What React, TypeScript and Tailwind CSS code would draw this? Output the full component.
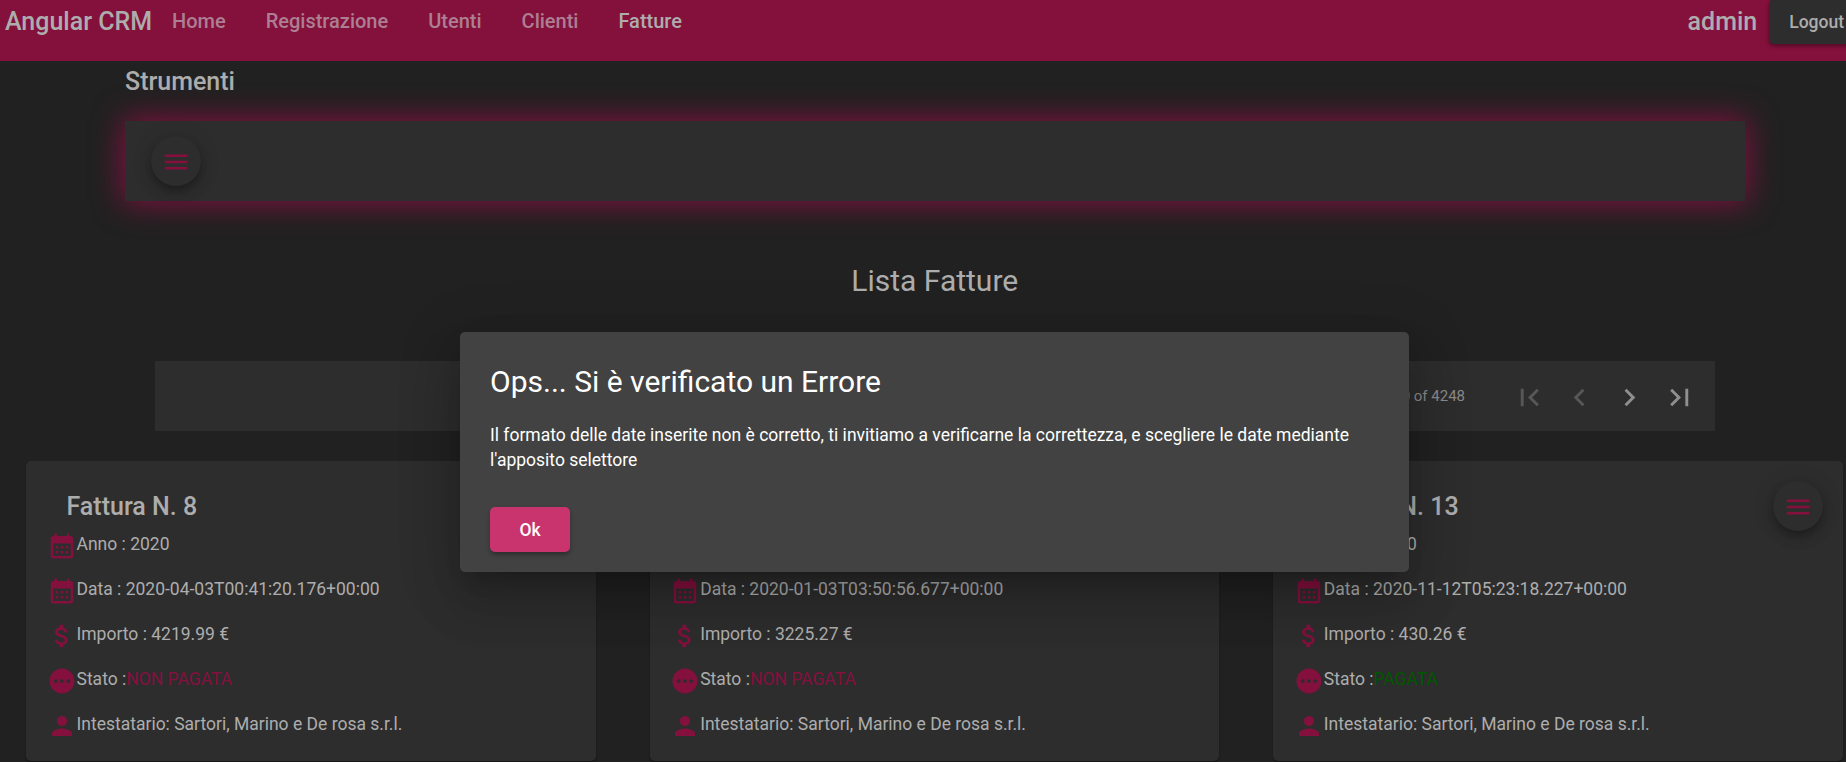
import type { ReactNode } from "react";
import {
  MdAttachMoney,
  MdCalendarMonth,
  MdChevronLeft,
  MdChevronRight,
  MdFirstPage,
  MdLastPage,
  MdMenu,
  MdPending,
  MdPerson,
} from "react-icons/md";

type Invoice = { number: number; year: number; date: string; amount: string; paid: boolean; holder: string };

const holder = "Sartori, Marino e De rosa s.r.l.";

const invoices: Invoice[] = [
  { number: 8, year: 2020, date: "2020-04-03T00:41:20.176+00:00", amount: "4219.99", paid: false, holder },
  { number: 11, year: 2020, date: "2020-01-03T03:50:56.677+00:00", amount: "3225.27", paid: false, holder },
  { number: 13, year: 2020, date: "2020-11-12T05:23:18.227+00:00", amount: "430.26", paid: true, holder },
];

const links = ["Home", "Registrazione", "Utenti", "Clienti"];

function MenuFab() {
  return (
    <button className="flex size-[50px] items-center justify-center rounded-full bg-[#2d2d2d] pt-[2px] text-[#84103e] shadow-[0_4px_6px_-1px_rgba(0,0,0,0.2),0_7.5px_12.5px_rgba(0,0,0,0.14),0_1px_22px_rgba(0,0,0,0.12)]">
      <MdMenu size={30} />
    </button>
  );
}

function Row({ icon, children }: { icon: ReactNode; children: ReactNode }) {
  return (
    <div className="flex h-[45px] items-start pl-[20.5px]">
      <span className="mt-[10px] text-[#84103e]">{icon}</span>
      <span className="mt-[11px] text-[17.5px] leading-6 whitespace-nowrap">{children}</span>
    </div>
  );
}

function InvoiceCard({ invoice }: { invoice: Invoice }) {
  return (
    <article className="relative h-[300px] rounded-[5px] bg-[#2d2d2d] pt-[31px] shadow-[0_2px_2px_rgba(0,0,0,0.3)]">
      <div className="absolute top-5 right-5">
        <MenuFab />
      </div>
      <h3 className="mb-[-1px] pl-[40.5px] text-[25px] leading-[30px] font-medium">Fattura N. {invoice.number}</h3>
      <Row icon={<MdCalendarMonth size={30} />}>Anno : {invoice.year}</Row>
      <Row icon={<MdCalendarMonth size={30} />}>Data : {invoice.date}</Row>
      <Row icon={<MdAttachMoney size={30} />}>Importo : {invoice.amount} €</Row>
      <Row icon={<MdPending size={30} />}>
        Stato :
        {invoice.paid ? <span className="text-[#005700]">PAGATA</span> : <span className="text-[#84103e]">NON PAGATA</span>}
      </Row>
      <Row icon={<MdPerson size={30} />}>Intestatario: {invoice.holder}</Row>
    </article>
  );
}

export default function App() {
  return (
    <div className="relative h-[762px] w-[1846px] overflow-hidden bg-[#212121] font-[Roboto,sans-serif] text-[#adadad]">
      <nav className="flex h-[61px] items-start bg-[#84103c] font-medium whitespace-nowrap">
        <span className="mt-[7px] w-[172px] pl-[5px] text-[25px] leading-[30px]">Angular CRM</span>
        <div className="mt-[6px] flex gap-[40px] text-[20px] leading-[30px]">
          {links.map((l) => (
            <a key={l} className="text-[#ad7f92]">
              {l}
            </a>
          ))}
          <a>Fatture</a>
        </div>
        <span className="mt-[7px] ml-auto text-[25px] leading-[30px]">admin</span>
        <button className="-mt-px -mr-[18px] ml-[12px] h-[45px] rounded-[5px] bg-[#2d2d2d] px-[20px] pt-px text-[17.5px] shadow-[0_2px_4px_rgba(0,0,0,0.4)]">
          Logout
        </button>
      </nav>

      <main className="flex flex-col pt-[6px]">
        <h3 className="pl-[125px] text-[25px] leading-[30px] font-medium">Strumenti</h3>
        <section className="mt-[24px] ml-[125px] flex h-[80px] w-[1620px] items-center bg-[#2d2d2d] pl-[26px] shadow-[0_0_31px_2px_#84103e]">
          <MenuFab />
        </section>

        <h2 className="mt-[60px] ml-[23.5px] text-center text-[30px] leading-[40px]">Lista Fatture</h2>

        <section className="mt-[60px] ml-[155px] flex h-[70px] w-[1560px] items-center justify-end bg-[#2d2d2d] pr-[18px] text-[15px] text-[#8a8a8a]">
          <span className="mr-[47px]">1 – 100 of 4248</span>
          <div className="mt-[3px] flex gap-[15px]">
            <MdFirstPage size={35} className="text-[#575757]" />
            <MdChevronLeft size={35} className="text-[#575757]" />
            <MdChevronRight size={35} className="text-[#8f8f8f]" />
            <MdLastPage size={35} className="text-[#8f8f8f]" />
          </div>
        </section>

        <div className="mt-[30px] ml-[26px] grid w-[1817px] grid-cols-3 gap-[54px]">
          {invoices.map((i) => (
            <InvoiceCard key={i.number} invoice={i} />
          ))}
        </div>
      </main>

      <div
        role="dialog"
        className="absolute top-[332px] left-[460px] h-[240px] w-[949px] rounded-[5px] bg-[#424242] p-[30px] text-white shadow-[0_14px_19px_-9px_rgba(0,0,0,0.2),0_30px_48px_4px_rgba(0,0,0,0.14),0_11px_58px_10px_rgba(0,0,0,0.12)]"
      >
        <h1 className="text-[30px] leading-[40px]">Ops... Si è verificato un Errore</h1>
        <p className="mt-[21px] text-[17.5px] leading-[25px]">
          Il formato delle date inserite non è corretto, ti invitiamo a verificarne la correttezza, e scegliere le date mediante
          <br />
          l'apposito selettore
        </p>
        <button className="mt-[34px] h-[45px] w-[80px] rounded-[5px] bg-[#c9346f] pt-px text-[17.5px] font-medium shadow-[0_3px_4px_rgba(0,0,0,0.3)]">
          Ok
        </button>
      </div>
    </div>
  );
}
